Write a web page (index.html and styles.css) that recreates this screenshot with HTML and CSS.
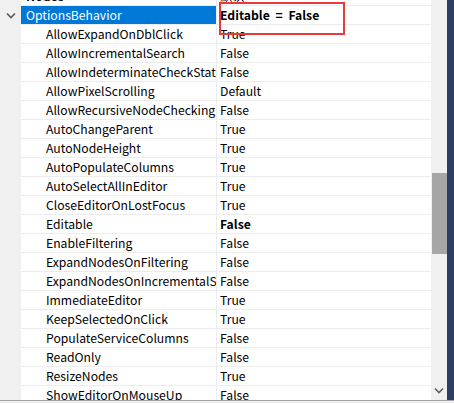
FILE: index.html
```html
<!DOCTYPE html>
<html>
<head>
<meta charset="utf-8">
<link rel="stylesheet" href="styles.css">
</head>
<body>
<div class="window">
  <div class="gutter">
    <svg class="chev" width="10" height="7" viewBox="0 0 10 7"><path d="M1 1.5 L5 5.5 L9 1.5" fill="none" stroke="#5a5a5a" stroke-width="1.6"/></svg>
  </div>
  <div class="tree">
    <div class="rows">
      <div class="row"><div class="name top">Nodes</div><div class="val">默认</div></div>
      <div class="row"><div class="name cat selected">OptionsBehavior</div><div class="val bold spaced">Editable = False</div></div>
      <div class="row"><div class="name">AllowExpandOnDblClick</div><div class="val">True</div></div>
      <div class="row"><div class="name">AllowIncrementalSearch</div><div class="val">False</div></div>
      <div class="row"><div class="name">AllowIndeterminateCheckState</div><div class="val">False</div></div>
      <div class="row"><div class="name">AllowPixelScrolling</div><div class="val">Default</div></div>
      <div class="row"><div class="name">AllowRecursiveNodeChecking</div><div class="val">False</div></div>
      <div class="row"><div class="name">AutoChangeParent</div><div class="val">True</div></div>
      <div class="row"><div class="name">AutoNodeHeight</div><div class="val">True</div></div>
      <div class="row"><div class="name">AutoPopulateColumns</div><div class="val">True</div></div>
      <div class="row"><div class="name">AutoSelectAllInEditor</div><div class="val">True</div></div>
      <div class="row"><div class="name">CloseEditorOnLostFocus</div><div class="val">True</div></div>
      <div class="row"><div class="name">Editable</div><div class="val bold">False</div></div>
      <div class="row"><div class="name">EnableFiltering</div><div class="val">False</div></div>
      <div class="row"><div class="name">ExpandNodesOnFiltering</div><div class="val">False</div></div>
      <div class="row"><div class="name">ExpandNodesOnIncrementalSearch</div><div class="val">False</div></div>
      <div class="row"><div class="name">ImmediateEditor</div><div class="val">True</div></div>
      <div class="row"><div class="name">KeepSelectedOnClick</div><div class="val">True</div></div>
      <div class="row"><div class="name">PopulateServiceColumns</div><div class="val">False</div></div>
      <div class="row"><div class="name">ReadOnly</div><div class="val">False</div></div>
      <div class="row"><div class="name">ResizeNodes</div><div class="val">True</div></div>
      <div class="row"><div class="name">ShowEditorOnMouseUp</div><div class="val">False</div></div>
    </div>
    <div class="highlight"></div>
  </div>
  <div class="scrollbar">
    <div class="thumb"></div>
    <svg class="arrow" width="10" height="7" viewBox="0 0 10 7"><path d="M1 1.5 L5 5.5 L9 1.5" fill="none" stroke="#606060" stroke-width="1.6"/></svg>
  </div>
  <div class="edge"></div>
</div>
<div class="bottom"></div>
</body>
</html>
```
FILE: styles.css
```css
html, body {
  margin: 0;
  padding: 0;
  width: 454px;
  height: 403px;
  overflow: hidden;
  background: #f0f0f0;
  font-family: "Noto Sans CJK SC", "Noto Sans", sans-serif;
  font-size: 12.2px;
  color: #000;
}
.window {
  display: flex;
  height: 400px;
}
.gutter {
  width: 21px;
  flex: none;
  background: #f0f0f0;
  position: relative;
}
.chev {
  position: absolute;
  left: 6px;
  top: 12px;
}
.tree {
  width: 410px;
  flex: none;
  background: #fff;
  position: relative;
  overflow: hidden;
}
.rows {
  margin-top: -13px;
}
.row {
  display: flex;
  height: 18px;
  border-bottom: 1px solid #ececec;
  line-height: 18px;
  white-space: nowrap;
}
.name {
  width: 170px;
  padding-left: 25px;
  border-right: 1px solid #ececec;
  overflow: hidden;
  text-overflow: clip;
  flex: none;
}
.name.cat, .name.top {
  padding-left: 5px;
  width: 190px;
}
.name.selected {
  background: #0078d7;
  color: #fff;
}
.val {
  padding-left: 3px;
  flex: 1;
  overflow: hidden;
}
.bold, .top {
  font-weight: bold;
}
.spaced {
  word-spacing: 3px;
}
.highlight {
  position: absolute;
  left: 198px;
  top: 2px;
  width: 122px;
  height: 29px;
  border: 2px solid #e8393b;
}
.scrollbar {
  width: 16px;
  flex: none;
  background: #f0f0f0;
  position: relative;
}
.thumb {
  position: absolute;
  left: 1px;
  top: 173px;
  width: 15px;
  height: 81px;
  background: #a6a6a6;
}
.arrow {
  position: absolute;
  left: 3px;
  top: 387px;
}
.edge {
  flex: 1;
  background: #2c3c62;
}
.bottom {
  height: 3px;
  border-top: 1px solid #a0a0a0;
  background: #f0f0f0;
}
```
